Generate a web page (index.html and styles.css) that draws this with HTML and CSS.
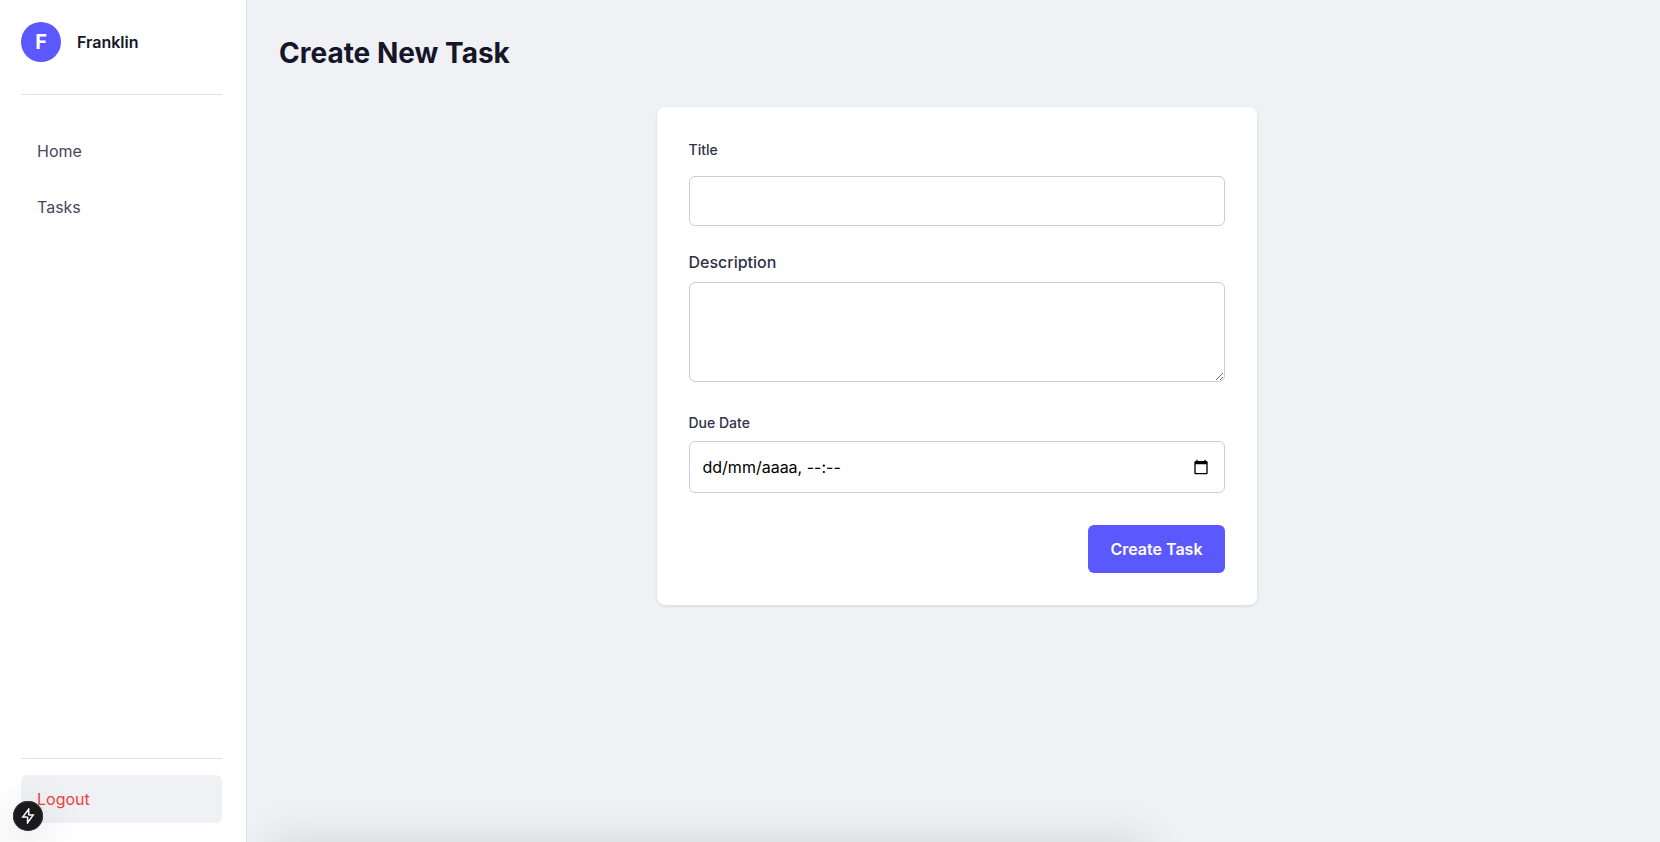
FILE: index.html
```html
<!DOCTYPE html>
<html lang="en">
<head>
<meta charset="utf-8">
<title>Create New Task</title>
<link rel="stylesheet" href="styles.css">
</head>
<body>
<div class="layout">
  <aside class="sidebar">
    <div class="profile">
      <span class="avatar">F</span>
      <span class="profile-name">Franklin</span>
    </div>
    <nav class="nav">
      <a class="nav-link" href="#home">Home</a>
      <a class="nav-link" href="#tasks">Tasks</a>
    </nav>
    <div class="sidebar-footer">
      <button class="logout" type="button">Logout</button>
    </div>
  </aside>
  <main class="main">
    <h1 class="heading">Create New Task</h1>
    <form class="card">
      <label class="label label-title" for="title">Title</label>
      <input class="control input-title" id="title" type="text">
      <label class="label label-description" for="description">Description</label>
      <textarea class="control textarea" id="description"></textarea>
      <label class="label label-due" for="due">Due Date</label>
      <div class="control date-field">
        <input class="date-input" id="due" type="text" placeholder="dd/mm/aaaa, --:--">
        <button class="date-button" type="button" aria-label="Open calendar">
          <svg class="date-icon" viewBox="0 0 24 24" fill="currentColor" aria-hidden="true"><path d="M20 3h-1V1h-2v2H7V1H5v2H4c-1.100 0-2 .9-2 2v16c0 1.100.9 2 2 2h16c1.100 0 2-.9 2-2V5c0-1.100-.9-2-2-2zm0 18H4V8h16v13z"/></svg>
        </button>
      </div>
      <button class="submit" type="button">Create Task</button>
    </form>
  </main>
</div>
<button class="devtools" type="button" aria-label="Developer tools">
  <svg class="devtools-icon" viewBox="0 0 16 16" fill="none" stroke="currentColor" stroke-width="1.500" stroke-linejoin="miter" aria-hidden="true"><path d="M8.700 1.200 2.800 8.900h3.700l1.100.5v5.400l5.600-7.700H9.300l-.6-.5z"/></svg>
</button>
</body>
</html>
```
FILE: styles.css
```css
*, *::before, *::after { box-sizing: border-box; }

body {
  margin: 0;
  background: #f0f1f5;
  color: #15162a;
  font-family: Inter, "Liberation Sans", sans-serif;
  font-size: 16px;
  line-height: 24px;
}

button, input, textarea { font: inherit; }

.layout { display: flex; min-height: 100vh; }

.sidebar {
  display: flex;
  flex-direction: column;
  flex: 0 0 247px;
  padding: 22px 24px 19px 21px;
  background: #fff;
  border-right: 1px solid #e0e0e9;
}

.profile {
  display: flex;
  align-items: center;
  gap: 16px;
  padding-bottom: 32px;
  border-bottom: 1px solid #e0e0e9;
}

.avatar {
  display: flex;
  align-items: center;
  justify-content: center;
  width: 40px;
  height: 40px;
  border-radius: 50%;
  background: #5b58fd;
  color: #fff;
  font-size: 20px;
  font-weight: 700;
}

.profile-name { font-weight: 600; }

.nav { display: grid; gap: 8px; padding-top: 32px; }

.nav-link {
  padding: 12px 16px;
  border-radius: 6px;
  color: #45475a;
  text-decoration: none;
}

.sidebar-footer {
  margin-top: auto;
  padding-top: 16px;
  border-top: 1px solid #e0e0e9;
}

.logout {
  display: block;
  width: 100%;
  padding: 12px 16px;
  border: 0;
  border-radius: 6px;
  background: #f0f1f5;
  color: #ee3f3f;
  text-align: left;
}

.main {
  position: relative;
  flex: 1;
  padding: 32px 26px 32px 32px;
  overflow: hidden;
}

.main::after {
  content: "";
  position: absolute;
  top: 100%;
  left: 24px;
  width: 62%;
  height: 80px;
  box-shadow: 0 0 48px rgba(0, 0, 0, 0.12);
}

.heading {
  margin: 0 0 32px;
  font-size: 28px;
  font-weight: 700;
  line-height: 43px;
}

.card {
  display: flex;
  flex-direction: column;
  max-width: 600px;
  margin: 0 auto;
  padding: 32px;
  border-radius: 8px;
  background: #fff;
  box-shadow: 0 1px 3px rgba(20, 20, 40, 0.12);
}

.label { color: #303248; font-weight: 500; }

.label-title { font-size: 14px; line-height: 21px; margin-bottom: 16px; }
.label-description { margin: 24px 0 8px; }
.label-due { font-size: 14px; line-height: 21px; margin: 30px 0 8px; }

.control {
  width: 100%;
  border: 1px solid #cccdd6;
  border-radius: 6px;
  background: #fff;
}

.input-title { height: 50px; padding: 12px; }

.textarea {
  display: block;
  height: 100px;
  padding: 12px;
  resize: vertical;
}

.date-field {
  display: flex;
  align-items: center;
  padding: 13px;
}

.date-input {
  flex: 1;
  min-width: 0;
  height: 24px;
  padding: 0;
  border: 0;
  background: none;
  color: #000;
}

.date-input::placeholder { color: #000; opacity: 1; }

.date-button {
  display: flex;
  padding: 2px;
  border: 0;
  background: none;
  color: #000;
}

.date-icon { width: 16px; height: 16px; }

.submit {
  align-self: flex-end;
  margin-top: 32px;
  padding: 12px 22px;
  border: 0;
  border-radius: 6px;
  background: #5b58fd;
  color: #fff;
  font-weight: 600;
}

.devtools {
  position: fixed;
  bottom: 11px;
  left: 13px;
  display: flex;
  align-items: center;
  justify-content: center;
  width: 30px;
  height: 30px;
  padding: 0;
  border: 0;
  border-radius: 50%;
  background: #1a1a1c;
  color: #fff;
  box-shadow: 0 0 0 1px #3a3a3c inset, 0 8px 40px rgba(0, 0, 0, 0.18);
}

.devtools-icon { width: 16px; height: 16px; }
```
